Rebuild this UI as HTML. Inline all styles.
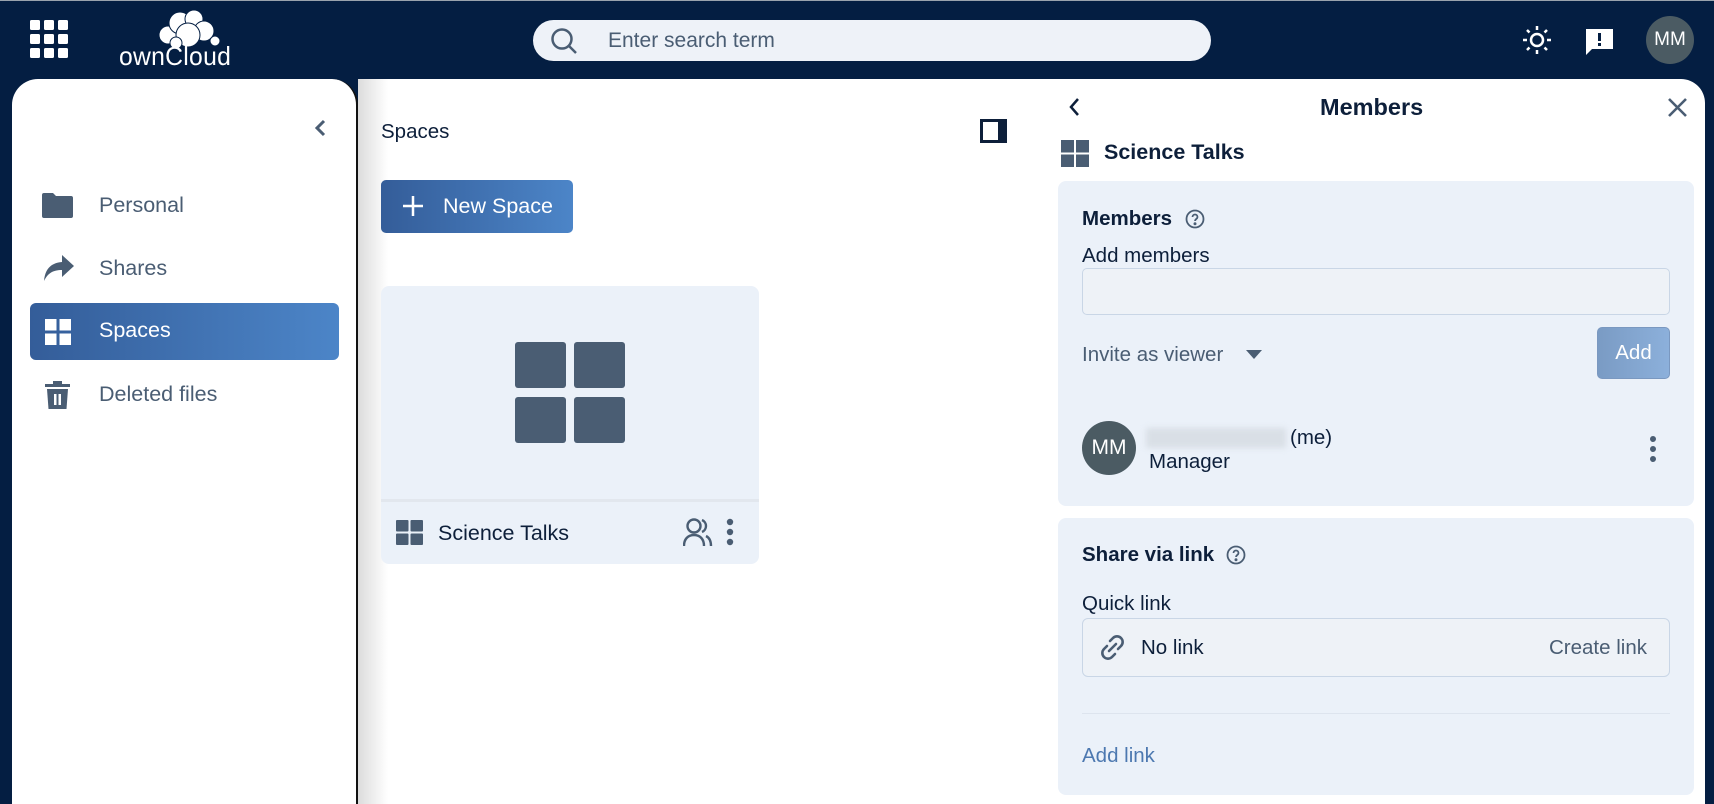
<!DOCTYPE html>
<html><head><meta charset="utf-8"><style>
*{box-sizing:border-box;margin:0;padding:0}
body{width:1714px;height:804px;overflow:hidden;background:#041e42;font-family:"Liberation Sans",sans-serif;position:relative;color:#0d1f3a}
.a{position:absolute}
.t{white-space:nowrap}
</style></head><body>
<div class="a" style="left:0;top:0;width:1714px;height:1px;background:#9aa3ad"></div>
<svg class="a" style="left:30px;top:20px" width="38" height="38" viewBox="0 0 38 38" fill="#fff">
<rect x="0" y="0" width="10" height="10" rx="1.5"/><rect x="14" y="0" width="10" height="10" rx="1.5"/><rect x="28" y="0" width="10" height="10" rx="1.5"/>
<rect x="0" y="14" width="10" height="10" rx="1.5"/><rect x="14" y="14" width="10" height="10" rx="1.5"/><rect x="28" y="14" width="10" height="10" rx="1.5"/>
<rect x="0" y="28" width="10" height="10" rx="1.5"/><rect x="14" y="28" width="10" height="10" rx="1.5"/><rect x="28" y="28" width="10" height="10" rx="1.5"/></svg>
<svg class="a" style="left:150px;top:9px" width="80" height="44" viewBox="0 0 80 44" fill="#fff" stroke="#041e42" stroke-width="1">
<circle cx="18" cy="26" r="9"/><circle cx="30" cy="14" r="11"/><circle cx="44" cy="10" r="9"/><circle cx="54" cy="22" r="10"/><circle cx="65" cy="32" r="5"/><circle cx="38" cy="26" r="12"/><circle cx="26" cy="34" r="6"/></svg>
<div class="a t" style="left:119px;top:41px;font-size:26px;color:#fff;letter-spacing:0.3px;transform:scaleX(0.95);transform-origin:left">ownCloud</div>
<div class="a" style="left:533px;top:20px;width:678px;height:41px;border-radius:21px;background:#eef2f8"></div>
<svg class="a" style="left:550px;top:27px" width="28" height="28" viewBox="0 0 28 28" fill="none" stroke="#4a5d73" stroke-width="2.5"><circle cx="12" cy="12" r="9.5"/><path d="M19 19l7 7"/></svg>
<div class="a t" style="left:608px;top:29px;font-size:21px;color:#4a5d73">Enter search term</div>
<svg class="a" style="left:1522px;top:25px" width="30" height="30" viewBox="0 0 30 30" stroke="#fff" stroke-width="2.5" fill="none"><circle cx="15" cy="15" r="6"/><path d="M15 1v4M15 25v4M1 15h4M25 15h4M5 5l2.5 2.5M22.5 22.5L25 25M5 25l2.5-2.5M22.5 7.5L25 5"/></svg>
<svg class="a" style="left:1586px;top:28px" width="27" height="27" viewBox="0 0 27 27"><path d="M0 1h27v20H6l-6 6z" fill="#fff"/><rect x="12" y="5" width="3" height="8" fill="#041e42"/><rect x="12" y="15" width="3" height="3" fill="#041e42"/></svg>
<div class="a" style="left:1646px;top:16px;width:48px;height:48px;border-radius:50%;background:#4b5b63;color:#fff;font-size:19px;line-height:48px;text-align:center">MM</div>

<div class="a" style="left:12px;top:79px;width:346px;height:725px;background:#fff;border-radius:26px 26px 0 0;border-right:2px solid #111"></div>
<svg class="a" style="left:313px;top:119px" width="14" height="18" viewBox="0 0 14 18"><path d="M11 2L4 9l7 7" stroke="#4a5d73" stroke-width="3" fill="none"/></svg>
<svg class="a" style="left:42px;top:193px" width="31" height="25" viewBox="0 0 31 25" fill="#4a5d73"><path d="M0 2a2 2 0 012-2h9l3 3h15a2 2 0 012 2v18a2 2 0 01-2 2H2a2 2 0 01-2-2z"/></svg>
<div class="a t" style="left:99px;top:193px;font-size:21.5px;color:#4a5d73">Personal</div>
<svg class="a" style="left:44px;top:255px" width="30" height="26" viewBox="0 0 30 26" fill="#4a5d73"><path d="M18 0l12 11-12 11v-7C9 15 4 18 0 26 1 15 6 8 18 7z"/></svg>
<div class="a t" style="left:99px;top:256px;font-size:21.5px;color:#4a5d73">Shares</div>
<div class="a" style="left:30px;top:303px;width:309px;height:57px;border-radius:6px;background:linear-gradient(90deg,#345d99,#4c85c8)"></div>
<svg class="a" style="left:45px;top:319px" width="26" height="26" viewBox="0 0 26 26" fill="#fff"><rect width="11.5" height="11.5"/><rect x="14.5" width="11.5" height="11.5"/><rect y="14.5" width="11.5" height="11.5"/><rect x="14.5" y="14.5" width="11.5" height="11.5"/></svg>
<div class="a t" style="left:99px;top:318px;font-size:21.5px;color:#fff">Spaces</div>
<svg class="a" style="left:45px;top:381px" width="25" height="28" viewBox="0 0 25 28" fill="#4a5d73"><rect x="0" y="3" width="25" height="3"/><rect x="8" y="0" width="9" height="3"/><path d="M2 8h21l-1.5 20h-18z"/><rect x="9" y="13" width="2.5" height="11" fill="#fff"/><rect x="13.5" y="13" width="2.5" height="11" fill="#fff"/></svg>
<div class="a t" style="left:99px;top:382px;font-size:21.5px;color:#4a5d73">Deleted files</div>

<div class="a" style="left:358px;top:79px;width:688px;height:725px;background:#fff"></div>
<div class="a" style="left:358px;top:79px;width:30px;height:725px;background:linear-gradient(90deg,#dcdcdc,#fff)"></div>
<div class="a t" style="left:381px;top:120px;font-size:20.5px;color:#0d1f3a">Spaces</div>
<svg class="a" style="left:980px;top:119px" width="27" height="24" viewBox="0 0 27 24" fill="none"><rect x="1.5" y="1.5" width="24" height="21" stroke="#0d1f3a" stroke-width="3"/><rect x="18" y="2" width="7" height="20" fill="#0d1f3a"/></svg>
<div class="a" style="left:381px;top:180px;width:192px;height:53px;border-radius:5px;background:linear-gradient(90deg,#345d99,#4c85c8)"></div>
<svg class="a" style="left:403px;top:196px" width="20" height="20" viewBox="0 0 20 20"><path d="M10 0v20M0 10h20" stroke="#fff" stroke-width="2.5"/></svg>
<div class="a t" style="left:443px;top:194px;font-size:21.5px;color:#fff">New Space</div>
<div class="a" style="left:381px;top:286px;width:378px;height:278px;border-radius:8px;background:#ebf1f9"></div>
<div class="a" style="left:381px;top:499px;width:378px;height:3px;background:#e2e7ee"></div>
<svg class="a" style="left:515px;top:342px" width="110" height="101" viewBox="0 0 110 101" fill="#4a5d73"><rect width="51" height="46" rx="3"/><rect x="59" width="51" height="46" rx="3"/><rect y="55" width="51" height="46" rx="3"/><rect x="59" y="55" width="51" height="46" rx="3"/></svg>
<svg class="a" style="left:396px;top:520px" width="27" height="25" viewBox="0 0 27 25" fill="#4a5d73"><rect width="12.5" height="11.5" rx="1"/><rect x="14.5" width="12.5" height="11.5" rx="1"/><rect y="13.5" width="12.5" height="11.5" rx="1"/><rect x="14.5" y="13.5" width="12.5" height="11.5" rx="1"/></svg>
<div class="a t" style="left:438px;top:521px;font-size:21.5px;color:#0d1f3a">Science Talks</div>
<svg class="a" style="left:683px;top:517px" width="30" height="30" viewBox="0 0 30 30" fill="none" stroke="#4a5d73" stroke-width="2.4"><circle cx="11" cy="9" r="6.5"/><path d="M1 29c0-7 4-11 10-11s10 4 10 11"/><path d="M19 3a6.5 6.5 0 010 12M23 19c3 1.5 5 5 5 10"/></svg>
<svg class="a" style="left:726px;top:518px" width="8" height="28" viewBox="0 0 8 28" fill="#4a5d73"><circle cx="4" cy="4" r="3.2"/><circle cx="4" cy="14" r="3.2"/><circle cx="4" cy="24" r="3.2"/></svg>

<div class="a" style="left:1046px;top:79px;width:659px;height:725px;background:#fff;border-radius:0 24px 0 0"></div>
<svg class="a" style="left:1068px;top:97px" width="12" height="20" viewBox="0 0 12 20"><path d="M10 2L3 10l7 8" stroke="#0d1f3a" stroke-width="2.5" fill="none"/></svg>
<div class="a t" style="left:1320px;top:94px;font-size:23.5px;font-weight:bold;color:#0d1f3a">Members</div>
<svg class="a" style="left:1668px;top:98px" width="19" height="19" viewBox="0 0 19 19"><path d="M1 1l17 17M18 1L1 18" stroke="#4a5d73" stroke-width="2.6"/></svg>
<svg class="a" style="left:1061px;top:140px" width="28" height="27" viewBox="0 0 28 27" fill="#4a5d73"><rect width="13" height="12.5"/><rect x="15" width="13" height="12.5"/><rect y="14.5" width="13" height="12.5"/><rect x="15" y="14.5" width="13" height="12.5"/></svg>
<div class="a t" style="left:1104px;top:140px;font-size:21.5px;font-weight:bold;color:#0d1f3a">Science Talks</div>

<div class="a" style="left:1058px;top:181px;width:636px;height:325px;border-radius:8px;background:#ebf1f9"></div>
<div class="a t" style="left:1082px;top:207px;font-size:20.5px;font-weight:bold;color:#0d1f3a">Members</div>
<svg class="a" style="left:1185px;top:209px" width="20" height="20" viewBox="0 0 20 20" fill="none" stroke="#4a5d73" stroke-width="1.8"><circle cx="10" cy="10" r="8.5"/><path d="M7.5 8a2.5 2.5 0 115 0c0 2-2.5 2-2.5 4"/><circle cx="10" cy="14.8" r=".6" fill="#4a5d73"/></svg>
<div class="a t" style="left:1082px;top:244px;font-size:20.5px;color:#0d1f3a">Add members</div>
<div class="a" style="left:1082px;top:268px;width:588px;height:47px;border-radius:5px;background:#eef2f7;border:1px solid #c9d6e6"></div>
<div class="a t" style="left:1082px;top:343px;font-size:20.5px;color:#4a5d73">Invite as viewer</div>
<svg class="a" style="left:1246px;top:350px" width="16" height="10" viewBox="0 0 16 10"><path d="M0 0h16L8 9z" fill="#4a5d73"/></svg>
<div class="a" style="left:1597px;top:327px;width:73px;height:52px;border-radius:5px;background:linear-gradient(90deg,#7a9bc4,#8cb0db);border:1px solid #7a98c0;color:#fff;font-size:20.5px;line-height:50px;text-align:center">Add</div>
<div class="a" style="left:1082px;top:421px;width:54px;height:54px;border-radius:50%;background:#4b5b63;color:#fff;font-size:21px;line-height:54px;text-align:center">MM</div>
<div class="a" style="left:1146px;top:428px;width:140px;height:20px;background:#d9dfe6;filter:blur(3px)"></div>
<div class="a t" style="left:1290px;top:426px;font-size:20.5px;color:#0d1f3a">(me)</div>
<div class="a t" style="left:1149px;top:450px;font-size:20.5px;color:#0d1f3a">Manager</div>
<svg class="a" style="left:1649px;top:435px" width="8" height="28" viewBox="0 0 8 28" fill="#4a5d73"><circle cx="4" cy="4" r="3"/><circle cx="4" cy="14" r="3"/><circle cx="4" cy="24" r="3"/></svg>

<div class="a" style="left:1058px;top:518px;width:636px;height:277px;border-radius:8px;background:#ebf1f9"></div>
<div class="a t" style="left:1082px;top:543px;font-size:20.5px;font-weight:bold;color:#0d1f3a">Share via link</div>
<svg class="a" style="left:1226px;top:545px" width="20" height="20" viewBox="0 0 20 20" fill="none" stroke="#4a5d73" stroke-width="1.8"><circle cx="10" cy="10" r="8.5"/><path d="M7.5 8a2.5 2.5 0 115 0c0 2-2.5 2-2.5 4"/><circle cx="10" cy="14.8" r=".6" fill="#4a5d73"/></svg>
<div class="a t" style="left:1082px;top:592px;font-size:20.5px;color:#0d1f3a">Quick link</div>
<div class="a" style="left:1082px;top:618px;width:588px;height:59px;border-radius:6px;background:#eef2f7;border:1px solid #c9d6e6"></div>
<svg class="a" style="left:1098px;top:633px" width="29" height="29" viewBox="0 0 29 29" fill="none" stroke="#4a5d73" stroke-width="2.6" stroke-linecap="round"><path d="M12 8l3-3a5.5 5.5 0 018 8l-3 3"/><path d="M17 21l-3 3a5.5 5.5 0 01-8-8l3-3"/><path d="M11 18l7-7"/></svg>
<div class="a t" style="left:1141px;top:636px;font-size:20.5px;color:#0d1f3a">No link</div>
<div class="a t" style="left:1549px;top:636px;font-size:20.5px;color:#4a5d73">Create link</div>
<div class="a" style="left:1082px;top:713px;width:588px;height:1px;background:#dde4ee"></div>
<div class="a t" style="left:1082px;top:744px;font-size:20.5px;color:#4c78b0">Add link</div>
</body></html>
